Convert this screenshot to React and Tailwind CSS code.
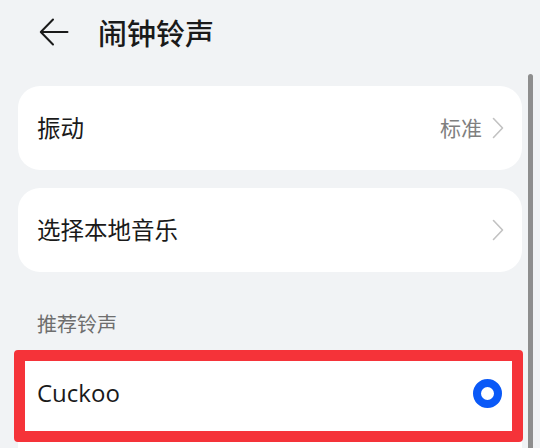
import React from "react";

const cjk = { fontFamily: '"Noto Sans CJK SC", "Noto Sans", sans-serif' };

function Chevron() {
  return (
    <svg width="12" height="22" viewBox="0 0 12 22" fill="none">
      <polyline
        points="1.5,1.5 10.5,11 1.5,20.5"
        stroke="#c2c2c2"
        strokeWidth="1.6"
        strokeLinecap="round"
        strokeLinejoin="round"
      />
    </svg>
  );
}

export default function App() {
  return (
    <div
      className="relative w-[540px] h-[448px] overflow-hidden bg-[#f1f3f5]"
      style={cjk}
    >
      {/* Header */}
      <div className="flex items-center h-[64px] pl-[39px]">
        <svg width="30" height="28" viewBox="0 0 30 28" fill="none">
          <path
            d="M28.5 14H2M14 1.5L1.8 14L14 26.5"
            stroke="#1a1a1a"
            strokeWidth="2"
            strokeLinecap="round"
            strokeLinejoin="round"
          />
        </svg>
        <h1 className="ml-[29px] text-[29px] leading-none font-medium text-[#1a1a1a]">
          闹钟铃声
        </h1>
      </div>

      <div className="pl-[18px] pr-[18px] mt-[22px]">
        {/* Vibration */}
        <div className="flex items-center justify-between h-[84px] bg-white rounded-[22px] pl-[19px] pr-[18px]">
          <span className="text-[23.5px] text-[#1a1a1a]">振动</span>
          <div className="flex items-center gap-[10px]">
            <span className="text-[21px] text-[#7f7f7f]">标准</span>
            <Chevron />
          </div>
        </div>

        {/* Local music */}
        <div className="flex items-center justify-between h-[84px] bg-white rounded-[22px] pl-[19px] pr-[18px] mt-[18px]">
          <span className="text-[23.5px] text-[#1a1a1a]">选择本地音乐</span>
          <Chevron />
        </div>

        {/* Section label */}
        <div className="mt-[38px] mb-[14px] pl-[19px] h-[28px] flex items-center text-[20px] text-[#6e6e6e]">
          推荐铃声
        </div>

        {/* Ringtone list */}
        <div className="relative bg-white rounded-t-[22px]">
          <div className="flex items-center justify-between h-[82px] pl-[19px] pr-[20px]">
            <span
              className="text-[24px] text-[#1a1a1a]"
              style={{ fontFamily: '"Open Sans", "Noto Sans", sans-serif' }}
            >
              Cuckoo
            </span>
            <span className="w-[29px] h-[29px] rounded-full border-[8px] border-[#0a59f7] bg-white" />
          </div>
          <div className="h-[40px]" />
          {/* annotation frame */}
          <div className="absolute left-[-4px] right-[-1px] top-[-2px] h-[92px] border-[11px] border-[#f53339] rounded-[4px]" />
        </div>
      </div>

      {/* Scrollbar */}
      <div className="absolute right-[7px] top-[74px] w-[5px] h-[380px] rounded-full bg-[#8e8e8e]" />
    </div>
  );
}
